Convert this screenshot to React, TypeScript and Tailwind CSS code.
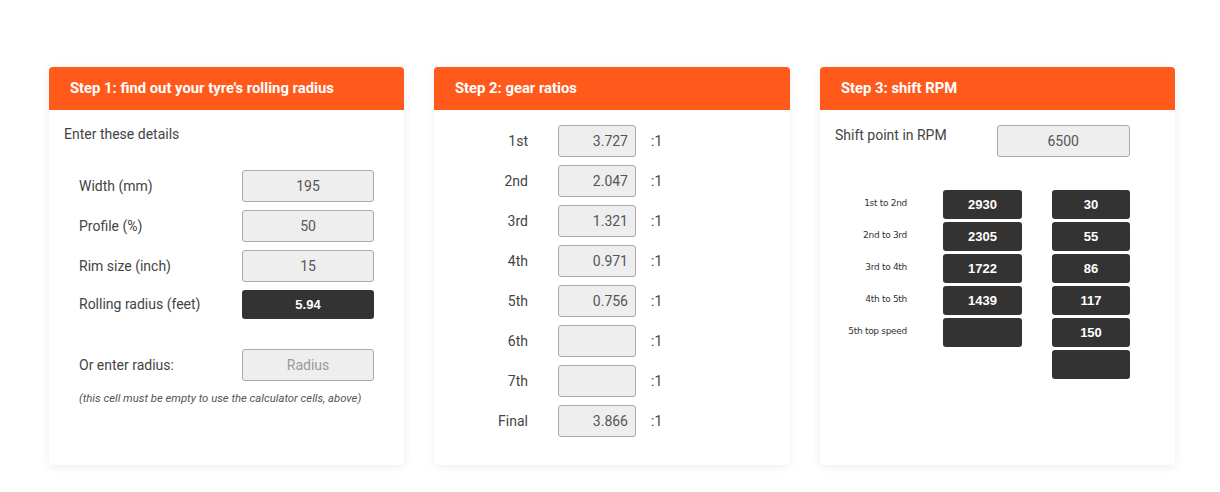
const tyreRows = [
  { label: "Width (mm)", value: "195" },
  { label: "Profile (%)", value: "50" },
  { label: "Rim size (inch)", value: "15" },
];

const gears = [
  { label: "1st", value: "3.727" },
  { label: "2nd", value: "2.047" },
  { label: "3rd", value: "1.321" },
  { label: "4th", value: "0.971" },
  { label: "5th", value: "0.756" },
  { label: "6th", value: "" },
  { label: "7th", value: "" },
  { label: "Final", value: "3.866" },
];

const shifts = [
  { label: "1st to 2nd", rpm: "2930", speed: "30" },
  { label: "2nd to 3rd", rpm: "2305", speed: "55" },
  { label: "3rd to 4th", rpm: "1722", speed: "86" },
  { label: "4th to 5th", rpm: "1439", speed: "117" },
  { label: "5th top speed", rpm: "", speed: "150" },
];

const Card = ({ title, children }: { title: string; children: React.ReactNode }) => (
  <div className="h-[398px] rounded-[4px] bg-white shadow-[0_2px_10px_rgba(0,0,0,0.07)] overflow-hidden">
    <div className="h-[43px] bg-[#ff5a1c] pl-[21px] flex items-center text-white font-bold text-[14.8px]">
      {title}
    </div>
    {children}
  </div>
);

const Field = ({ value, className = "" }: { value: string; className?: string }) => (
  <div
    className={`h-[32px] rounded-[3px] border border-[#aaaaaa] bg-[#eeeeee] flex items-center text-[14px] text-[#555] ${className}`}
  >
    {value}
  </div>
);

const Dark = ({ value, className = "" }: { value: string; className?: string }) => (
  <div
    className={`h-[29px] rounded-[3px] bg-[#333333] flex items-center justify-center text-white font-bold text-[13px] font-['Liberation_Sans',sans-serif] ${className}`}
  >
    {value}
  </div>
);

export default function App() {
  return (
    <div className="min-h-[492px] bg-white font-['Roboto',sans-serif] pt-[67px] pl-[49px]">
      <div className="grid grid-cols-[355px_356px_355px] gap-x-[30px]">
        <Card title="Step 1: find out your tyre's rolling radius">
          <div className="pt-[14px] pl-[15px] text-[14px] text-[#444]">Enter these details</div>
          <div className="mt-[25px] pl-[30px] pr-[30px] flex flex-col gap-[8px]">
            {tyreRows.map((r) => (
              <div key={r.label} className="flex items-center justify-between">
                <span className="text-[14px] text-[#444]">{r.label}</span>
                <Field value={r.value} className="w-[132px] justify-center" />
              </div>
            ))}
            <div className="flex items-center justify-between">
              <span className="text-[14px] text-[#444]">Rolling radius (feet)</span>
              <Dark value="5.94" className="w-[132px]" />
            </div>
          </div>
          <div className="mt-[30px] pl-[30px] pr-[30px] flex items-center justify-between">
            <span className="text-[14px] text-[#444]">Or enter radius:</span>
            <Field value="Radius" className="w-[132px] justify-center text-[#999]" />
          </div>
          <div className="mt-[10px] pl-[30px] text-[11.3px] italic text-[#555]">
            (this cell must be empty to use the calculator cells, above)
          </div>
        </Card>

        <Card title="Step 2: gear ratios">
          <div className="pt-[15px] flex flex-col gap-[8px]">
            {gears.map((g) => (
              <div key={g.label} className="flex items-center">
                <span className="w-[94px] text-right text-[14px] text-[#444]">{g.label}</span>
                <Field value={g.value} className="ml-[30px] w-[78px] justify-end pr-[7px]" />
                <span className="ml-[15px] text-[14px] text-[#444]">:1</span>
              </div>
            ))}
          </div>
        </Card>

        <Card title="Step 3: shift RPM">
          <div className="pt-[15px] pl-[15px] flex items-start">
            <span className="text-[14px] text-[#444]">Shift point in RPM</span>
            <Field value="6500" className="ml-[50px] w-[133px] justify-center" />
          </div>
          <div className="mt-[33px] flex flex-col gap-[3px]">
            {shifts.map((s) => (
              <div key={s.label} className="flex items-start">
                <span className="w-[87px] pt-[7px] text-right text-[9px] text-[#333] font-['DejaVu_Sans',sans-serif] tracking-[-0.3px]">
                  {s.label}
                </span>
                <Dark value={s.rpm} className="ml-[36px] w-[79px]" />
                <Dark value={s.speed} className="ml-[30px] w-[78px]" />
              </div>
            ))}
            <div className="flex">
              <Dark value="" className="ml-[232px] w-[78px]" />
            </div>
          </div>
        </Card>
      </div>
    </div>
  );
}
